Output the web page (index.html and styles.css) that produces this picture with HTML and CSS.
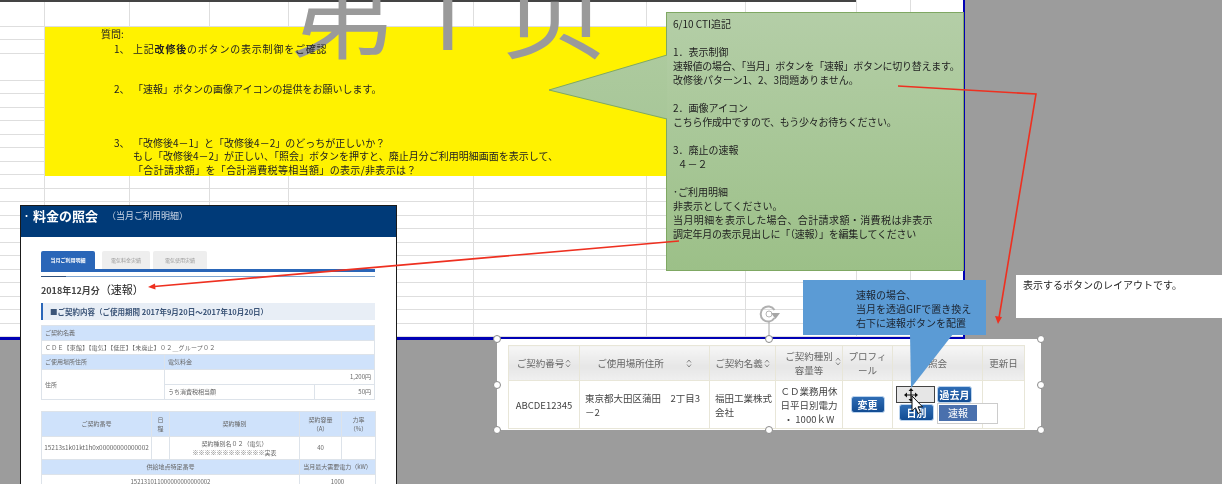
FILE: index.html
```html
<!DOCTYPE html>
<html lang="ja">
  <head>
    <meta charset="utf-8">
    <title>第1页</title>
    <link rel="stylesheet" href="styles.css">
  </head>
  <body>
    <div class="canvas">

      <!-- excel sheet -->
      <div class="sheet">
        <div class="col w45"></div>
        <div class="col w85"></div>
        <div class="col w80"></div>
        <div class="col w79"></div>
        <div class="col w185"></div>
        <div class="col w173"></div>
        <div class="col w99"></div>
        <div class="col w111"></div>
        <div class="col w54"></div>
      </div>
      <div class="topline"></div>
      <div class="yellow"></div>
      <div class="bigtitle">第<span class="bigone">1</span><span class="bigpage">页</span></div>
      <div class="question">
        <p class="q-head">質問:</p>
        <p class="q-row q-wide"><span class="q-no">1、</span><span>上記<b>改修後</b>のボタンの表示制御をご確認</span></p>
        <p class="q-row q-gap1"><span class="q-no">2、</span><span>「速報」ボタンの画像アイコンの提供をお願いします。</span></p>
        <p class="q-row q-gap2"><span class="q-no">3、</span><span>「改修後4－1」と「改修後4－2」のどっちが正しいか？</span></p>
        <p class="q-row"><span class="q-no"></span><span>もし「改修後4－2」が正しい、「照会」ボタンを押すと、廃止月分ご利用明細画面を表示して、</span></p>
        <p class="q-row q-last"><span class="q-no"></span><span>「合計請求額」を「合計消費税等相当額」の表示/非表示は？</span></p>
      </div>

      <!-- green callout -->
      <svg class="green-tail" width="120" height="70" viewBox="0 0 120 70">
        <defs>
          <linearGradient id="tailfill" x1="0" y1="0" x2="0" y2="1">
            <stop offset="0" stop-color="#adca9e"/>
            <stop offset="1" stop-color="#a8c799"/>
          </linearGradient>
        </defs>
        <polygon points="119,1 1,36 119,65" fill="url(#tailfill)"/>
        <polyline points="119,1 1,36 119,65" fill="none" stroke="#7fa863" stroke-width="1"/>
      </svg>
      <div class="green">
        <p>6/10 CTI追記</p>
        <p class="gap">1．表示制御</p>
        <p class="tight">速報値の場合、「当月」ボタンを「速報」ボタンに切り替えます。</p>
        <p>改修後パターン1、2、3問題ありません。</p>
        <p class="gap">2．画像アイコン</p>
        <p class="tight">こちら作成中ですので、もう少々お待ちください。</p>
        <p class="gap">3．廃止の速報</p>
        <p>&nbsp;&nbsp;４－２</p>
        <p class="gap">･ご利用明細</p>
        <p>非表示としてください。</p>
        <p class="loose">当月明細を表示した場合、合計請求額・消費税は非表示</p>
        <p class="tight">調定年月の表示見出しに「（速報）」を編集してください</p>
      </div>

      <!-- bill window -->
      <div class="bill">
        <div class="bill-head"><span class="bill-dot">・</span><span class="bill-title">料金の照会</span><span class="bill-sub">（当月ご利用明細）</span></div>
        <div class="bill-body">
          <div class="tabs">
            <span class="tab tab-on">当月ご利用明細</span>
            <span class="tab tab-2">電気料金実績</span>
            <span class="tab tab-3">電気使用実績</span>
          </div>
          <div class="progress"><span></span></div>
          <div class="bill-month">2018年12月分<span class="sokuho">（速報）</span></div>
          <div class="bill-section">■ご契約内容（ご使用期間 2017年9月20日～2017年10月20日）</div>
          <table class="info">
            <colgroup><col class="i1"><col class="i2"><col></colgroup>
            <tr><th colspan="3">ご契約名義</th></tr>
            <tr><td colspan="3" class="wide-text">ＣＤＥ【東館】【電気】【低圧】【未廃止】０２＿グループ０２</td></tr>
            <tr><th>ご使用場所住所</th><th colspan="2">電気料金</th></tr>
            <tr class="tall"><td rowspan="2">住所</td><td colspan="2" class="right">1,200円</td></tr>
            <tr class="tall"><td>うち消費税相当額</td><td class="right">50円</td></tr>
          </table>
          <table class="contract">
            <tr class="r1"><th class="c1">ご契約番号</th><th class="c2">日<br>程</th><th class="c3">契約種別</th><th class="c4">契約容量<br>（A）</th><th class="c5">力率<br>（%）</th></tr>
            <tr class="r2"><td class="long-no">15213s1k01kt1h0x00000000000002</td><td></td><td>契約種別名０２（電気）<br>※※※※※※※※※※※※実表</td><td>40</td><td></td></tr>
            <tr class="r3"><th colspan="3">供給地点特定番号</th><th colspan="2">当月最大需要電力（kW）</th></tr>
            <tr class="r4"><td colspan="3">152131011000000000000002</td><td colspan="2">1000</td></tr>
          </table>
        </div>
      </div>

      <!-- note on the right -->
      <div class="note">表示するボタンのレイアウトです。</div>

      <!-- pasted table with selection handles -->
      <div class="pasted">
        <table class="list">
          <tr class="list-head">
            <th class="l1">ご契約番号<svg class="sort" width="6" height="9" viewBox="0 0 6 9"><path d="M1 3.5 L3 1 L5 3.5 M1 5.5 L3 8 L5 5.5" fill="none" stroke="#888" stroke-width="1"/></svg></th>
            <th class="l2">ご使用場所住所<svg class="sort far" width="6" height="9" viewBox="0 0 6 9"><path d="M1 3.5 L3 1 L5 3.5 M1 5.5 L3 8 L5 5.5" fill="none" stroke="#888" stroke-width="1"/></svg></th>
            <th class="l3">ご契約名義<svg class="sort" width="6" height="9" viewBox="0 0 6 9"><path d="M1 3.5 L3 1 L5 3.5 M1 5.5 L3 8 L5 5.5" fill="none" stroke="#888" stroke-width="1"/></svg></th>
            <th class="l4">ご契約種別<br>容量等<svg class="sort up" width="6" height="9" viewBox="0 0 6 9"><path d="M1 3.5 L3 1 L5 3.5 M1 5.5 L3 8 L5 5.5" fill="none" stroke="#888" stroke-width="1"/></svg></th>
            <th class="l5">プロフィ<br>ール</th>
            <th class="l6">照会</th>
            <th class="l7">更新日</th>
          </tr>
          <tr class="list-row">
            <td>ABCDE12345</td>
            <td class="left">東京都大田区蒲田　2丁目3－2</td>
            <td class="left">福田工業株式会社</td>
            <td>ＣＤ業務用休日平日別電力<br>・ 1000ｋW</td>
            <td><span class="btn">変更</span></td>
            <td class="btn-cell">
              <div class="btn-line line-top"><span class="btn-ghost"></span><span class="btn">過去月</span></div>
              <div class="btn-line line-low"><span class="btn">日別</span><span class="sokuho-box"><span class="btn-flat">速報</span></span></div>
            </td>
            <td></td>
          </tr>
        </table>
      </div>
      <span class="handle h1"></span><span class="handle h2"></span><span class="handle h3"></span>
      <span class="handle h4"></span><span class="handle h5"></span>
      <span class="handle h6"></span><span class="handle h7"></span><span class="handle h8"></span>

      <!-- rotate handle -->
      <svg class="rotate" width="24" height="36" viewBox="0 0 24 36">
        <line x1="12" y1="17" x2="12" y2="34" stroke="#a6a6a6" stroke-width="1"/>
        <path d="M17.5 6 A7.5 7.5 0 1 0 17.5 14" fill="none" stroke="#b0b0b0" stroke-width="2"/>
        <polygon points="14,9 23,9 18.5,15" fill="#a6a6a6"/>
        <circle cx="12" cy="10" r="3" fill="none" stroke="#b5b5b5" stroke-width="1"/>
      </svg>

      <!-- blue callout -->
      <svg class="blue-tail" width="60" height="60" viewBox="0 0 60 60">
        <polygon points="1,0 44,0 2,54" fill="#5b9bd5"/>
      </svg>
      <div class="blue">
        <p>速報の場合、</p>
        <p>当月を透過GIFで置き換え</p>
        <p>右下に速報ボタンを配置</p>
      </div>

      <!-- move + mouse cursor -->
      <svg class="cursor" width="24" height="32" viewBox="0 0 24 32">
        <path d="M8 1 L5.5 4 H7.4 V7.4 H4 V5.5 L1 8 L4 10.5 V8.6 H7.4 V12 H5.5 L8 15 L10.5 12 H8.6 V8.6 H12 V10.5 L15 8 L12 5.5 V7.4 H8.6 V4 H10.5 Z" fill="#111"/>
        <path d="M9 9 V24 L12.5 20.8 L15 26.5 L17.5 25.4 L15 19.8 H19.5 Z" fill="#fff" stroke="#111" stroke-width="1"/>
      </svg>

      <!-- red arrows -->
      <svg class="arrows" width="1222" height="484" viewBox="0 0 1222 484">
        <polyline points="898,86 1036,94 999,318" fill="none" stroke="#ee3020" stroke-width="1.6"/>
        <polygon points="998,324 995,316 1002,317" fill="#ee3020"/>
        <line x1="679" y1="241" x2="154" y2="286.5" stroke="#ee3020" stroke-width="1.6"/>
        <polygon points="148,287 155,283.5 155.5,289.5" fill="#ee3020"/>
      </svg>
    </div>
  </body>
</html>
```

FILE: styles.css
```css
* {
  box-sizing: border-box;
}

html, body {
  margin: 0;
  padding: 0;
}

body {
  width: 1222px;
  height: 484px;
  overflow: hidden;
  background: #9c9c9c;
  font-family: "Noto Sans CJK JP", "Noto Sans", sans-serif;
  color: #222;
}

p {
  margin: 0;
}

.canvas {
  position: relative;
  width: 1222px;
  height: 484px;
  overflow: hidden;
  background: #9c9c9c;
}

/* sheet */
.sheet {
  position: absolute;
  left: 0;
  top: 0;
  width: 965px;
  height: 340px;
  display: flex;
  background-color: #fff;
  background-image: repeating-linear-gradient(to bottom, #fff 0, #fff 12.5px, #dedede 12.5px, #dedede 13.5px);
  border-right: 2px solid #0000b4;
  border-bottom: 3px solid #0000b4;
}

.col {
  height: 100%;
  border-right: 1px solid #dedede;
}

.w45 { width: 45px; }
.w85 { width: 85px; }
.w80 { width: 80px; }
.w79 { width: 79px; }
.w185 { width: 185px; }
.w173 { width: 173px; }
.w99 { width: 99px; }
.w111 { width: 111px; }
.w54 { width: 54px; }

.topline {
  position: absolute;
  left: 0;
  top: 0;
  width: 856px;
  height: 2px;
  background: #444;
}

.yellow {
  position: absolute;
  left: 45px;
  top: 27px;
  width: 625px;
  height: 149px;
  background: #fff200;
}

.bigtitle {
  position: absolute;
  left: 290px;
  top: -48px;
  font-size: 105px;
  line-height: 105px;
  color: #9a9a9a;
  white-space: nowrap;
}

.bigone {
  margin-left: 20px;
  font-family: "Noto Sans", sans-serif;
}

.bigpage {
  margin-left: 27px;
  font-family: "Noto Sans CJK SC", sans-serif;
}

/* yellow text */
.question {
  position: absolute;
  left: 101px;
  top: 27px;
  font-size: 10px;
  line-height: 13.6px;
  filter: blur(0.3px);
}

.q-head {
  margin-bottom: 1px;
}

.q-row {
  display: flex;
  margin-left: 13px;
  white-space: nowrap;
}

.q-wide {
  letter-spacing: 0.8px;
}

.q-last {
  letter-spacing: 0.35px;
}

.q-no {
  width: 19px;
  letter-spacing: 0;
}

.q-gap1 {
  margin-top: 27px;
}

.q-gap2 {
  margin-top: 40px;
}

/* green callout */
.green {
  position: absolute;
  left: 666px;
  top: 12px;
  width: 298px;
  height: 259px;
  padding: 4px 6px;
  background: linear-gradient(#b4cea7, #9cc088);
  border: 1px solid #7fa863;
  font-size: 10px;
  line-height: 14px;
  white-space: nowrap;
  filter: blur(0.25px);
}

.green .gap {
  margin-top: 14px;
}

.green .tight {
  letter-spacing: -0.25px;
}

.green .loose {
  letter-spacing: 0.4px;
}

.green-tail {
  position: absolute;
  left: 548px;
  top: 54px;
  z-index: 1;
}

/* bill window */
.bill {
  position: absolute;
  left: 20px;
  top: 205px;
  width: 377px;
  height: 290px;
  background: #fff;
  border: 1px solid #1a1a1a;
  filter: blur(0.5px);
  color: #555;
}

.bill-head {
  height: 31px;
  padding: 1px 0 0 1px;
  background: #003a78;
  color: #fff;
  display: flex;
  align-items: flex-start;
  line-height: 18px;
}

.bill-dot {
  width: 11px;
  font-size: 9px;
}

.bill-title {
  font-size: 13px;
  font-weight: 700;
}

.bill-sub {
  margin-left: 9px;
  font-size: 9px;
  color: #c8d4e4;
}

.bill-body {
  padding: 14px 0 0 20px;
  width: 354px;
}

.tabs {
  display: flex;
  gap: 3px;
  height: 21px;
  border-bottom: 3px solid #2a66b8;
}

.tab {
  height: 18px;
  background: #eee;
  font-size: 5px;
  line-height: 18px;
  text-align: center;
  color: #999;
  border-radius: 2px 2px 0 0;
}

.tab-on {
  width: 54px;
  margin-right: 4px;
  background: #2a66b8;
  color: #fff;
  font-weight: 700;
}

.tab-2 {
  width: 48px;
}

.tab-3 {
  width: 54px;
}

.progress {
  height: 1px;
  margin-top: 4px;
  background: #7da4d0;
}

.progress span {
  display: block;
  width: 25px;
  height: 1px;
  background: #2d4f7c;
}

.bill-month {
  margin-top: 5px;
  height: 15px;
  font-size: 9px;
  line-height: 15px;
  font-weight: 700;
  color: #444;
}

.sokuho {
  font-size: 11px;
  font-weight: 400;
  color: #222;
}

.bill-section {
  height: 17px;
  margin-top: 6px;
  padding-left: 7px;
  background: #e8eef6;
  border-left: 2px solid #2a66b8;
  font-size: 7.5px;
  line-height: 17px;
  font-weight: 700;
  color: #3c5578;
  white-space: nowrap;
}

.info,
.contract {
  width: 334px;
  border-collapse: collapse;
  table-layout: fixed;
  font-size: 6px;
  color: #666;
}

.info {
  margin-top: 5px;
}

.contract {
  margin-top: 11px;
}

.info th,
.info td,
.contract th,
.contract td {
  padding: 0 3px;
  border: 1px solid #dde3ea;
  font-weight: 400;
  line-height: 9px;
  height: 14.5px;
}

.info th {
  background: #cfe2fb;
  text-align: left;
}

.info .i1 {
  width: 123px;
}

.info .i2 {
  width: 150px;
}

.info .tall td {
  height: 15px;
}

.wide-text {
  letter-spacing: 0.2px;
}

.right {
  text-align: right;
}

.contract th {
  background: #cfe2fb;
  text-align: center;
}

.contract td {
  text-align: center;
}

.contract .long-no {
  padding: 0;
  font-size: 6.4px;
  white-space: nowrap;
}

.c1 { width: 110px; }
.c2 { width: 18px; }
.c3 { width: 130px; }
.c4 { width: 42px; }
.c5 { width: 34px; }

.contract .r1 th { height: 25px; }
.contract .r2 td { height: 23px; }
.contract .r3 th { height: 15px; }

/* note */
.note {
  position: absolute;
  left: 1016px;
  top: 275px;
  width: 206px;
  height: 43px;
  padding: 2px 7px;
  background: #fff;
  font-size: 10px;
  line-height: 16px;
  filter: blur(0.25px);
}

/* pasted table */
.pasted {
  position: absolute;
  left: 497px;
  top: 339px;
  width: 544px;
  height: 91px;
  padding: 6px 17px 0 11px;
  background: #fff;
  overflow: hidden;
  filter: blur(0.3px);
}

.list {
  width: 516px;
  border-collapse: collapse;
  table-layout: fixed;
  font-size: 9.5px;
  color: #555;
}

.list th,
.list td {
  border: 1px solid #e8e6d8;
  padding: 0 2px;
  font-weight: 400;
  line-height: 14px;
  text-align: center;
  position: relative;
}

.list-head th {
  height: 35px;
  background: linear-gradient(#f6f6f6, #e6e6e6 60%, #f0f0f0);
  color: #666;
}

.list-row td {
  height: 48px;
  color: #444;
}

.list .left {
  text-align: left;
  padding-left: 5px;
}

.l1 { width: 71px; }
.l2 { width: 130px; }
.l3 { width: 66px; }
.l4 { width: 67px; }
.l5 { width: 50px; }
.l6 { width: 90px; }
.l7 { width: 42px; }

.sort {
  margin-left: 1px;
  vertical-align: -1px;
}

.sort.far {
  margin-left: 22px;
}

.sort.up {
  position: absolute;
  right: 1px;
  top: 11px;
}

.btn {
  display: inline-block;
  height: 17px;
  padding: 0 6px;
  background: linear-gradient(#2f6db5, #124c93);
  border: 1px solid #bcd4ee;
  border-radius: 3px;
  color: #fff;
  font-size: 10px;
  font-weight: 700;
  line-height: 15px;
  white-space: nowrap;
}

.list .btn-cell {
  padding: 0;
  vertical-align: top;
}

.btn-line {
  display: flex;
  align-items: flex-start;
}

.line-top {
  height: 18px;
  margin-top: 5px;
  padding-left: 3px;
  gap: 2px;
}

.line-low {
  padding-left: 6px;
  gap: 3px;
}

.btn-ghost {
  flex: none;
  width: 39px;
  height: 17px;
  background: #e6e6e6;
  border: 1px solid #444;
}

.btn-line .btn {
  flex: none;
  width: 35px;
  padding: 0;
}

.sokuho-box {
  flex: none;
  width: 61px;
  height: 21px;
  margin-top: -1px;
  padding: 1px 0 0 1px;
  background: #fff;
  border: 1px solid #ccc;
  text-align: left;
}

.btn-flat {
  display: block;
  width: 38px;
  height: 16px;
  background: #4a70ad;
  color: #fff;
  font-size: 10px;
  line-height: 16px;
  text-align: center;
}

/* selection handles */
.handle {
  position: absolute;
  width: 8px;
  height: 8px;
  background: #fff;
  border: 1px solid #8a8a8a;
  border-radius: 50%;
  z-index: 3;
}

.h1 { left: 493px; top: 335px; }
.h2 { left: 765px; top: 335px; }
.h3 { left: 1037px; top: 335px; }
.h4 { left: 493px; top: 381px; }
.h5 { left: 1037px; top: 381px; }
.h6 { left: 493px; top: 426px; }
.h7 { left: 765px; top: 426px; }
.h8 { left: 1037px; top: 426px; }

.rotate {
  position: absolute;
  left: 757px;
  top: 304px;
}

/* blue callout */
.blue {
  position: absolute;
  left: 803px;
  top: 280px;
  width: 183px;
  height: 55px;
  padding: 8px 0 0 53px;
  background: #5b9bd5;
  font-size: 10px;
  line-height: 14px;
  white-space: nowrap;
  color: #1c2430;
  filter: blur(0.25px);
}

.blue-tail {
  position: absolute;
  left: 909px;
  top: 334px;
  z-index: 2;
}

.cursor {
  position: absolute;
  left: 903px;
  top: 387px;
  z-index: 4;
}

.arrows {
  position: absolute;
  left: 0;
  top: 0;
  z-index: 5;
  pointer-events: none;
}
```
